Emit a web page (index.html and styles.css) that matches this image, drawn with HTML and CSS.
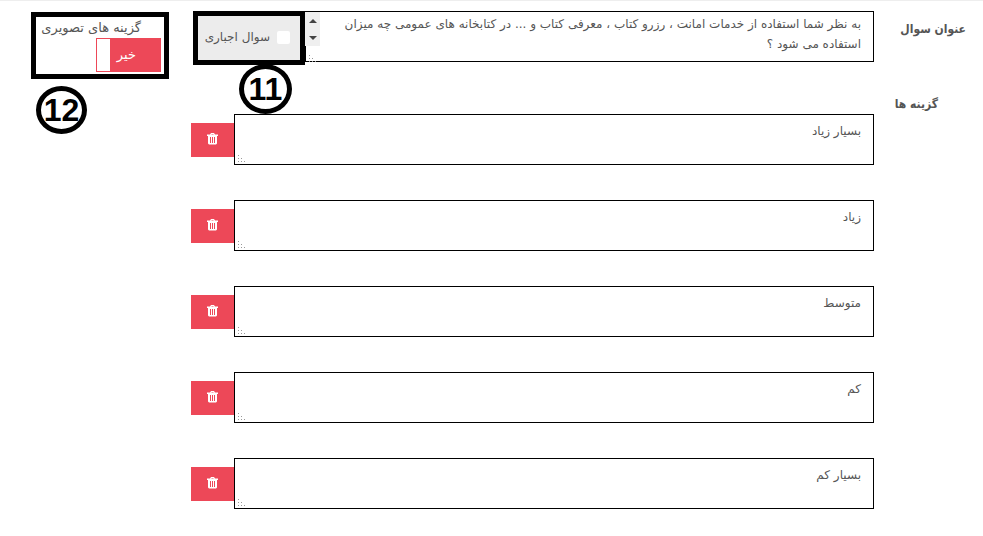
FILE: index.html
```
<!DOCTYPE html>
<html lang="fa" dir="rtl">
<head>
  <meta charset="UTF-8">
  <title>عنوان سوال</title>
  <link rel="stylesheet" href="styles.css">
</head>
<body>
  <svg class="sprite">
    <symbol id="trash" viewBox="0 0 11 12">
      <path fill="#fff" fill-rule="evenodd" d="M0 1.500h3L4 0h3l1 1.500h3V3h-1v7.500L9 11.500H2l-1-1V3H0zM4.300 1.500h2.400L6.300 1H4.700zM3 4v6h1V4zM5 4v6h1V4zM7 4v6h1V4z"/>
    </symbol>
    <symbol id="grip" viewBox="0 0 9 9">
      <path fill="#999" d="M1 1h1v1H1zM1 4h1v1H1zM4 4h1v1H4zM1 7h1v1H1zM4 7h1v1H4zM7 7h1v1H7z"/>
    </symbol>
  </svg>

  <form class="question-form">
    <!-- Question title -->
    <div class="form-row">
      <label class="row-label" for="title">عنوان سوال</label>
      <div class="title-group">
        <div class="field">
          <textarea id="title" class="text-area">به نظر شما استفاده از خدمات امانت ، رزرو کتاب ، معرفی کتاب و ... در کتابخانه های عمومی چه میزان استفاده می شود ؟</textarea>
          <svg class="scroller" viewBox="0 0 15 34">
            <rect width="15" height="34" fill="#efefef"/>
            <path fill="#444" d="M4 11l4-4 4 4zM4 24h8l-4 4z"/>
          </svg>
          <svg class="grip"><use href="#grip"/></svg>
        </div>
        <div class="required-box">
          <label class="required-label"><input type="checkbox" class="check">سوال اجباری</label>
          <span class="callout">11</span>
        </div>
      </div>
      <div class="image-box">
        <span class="switch-title" id="switch-title">گزینه های تصویری</span>
        <button type="button" class="switch" role="switch" aria-checked="false" aria-labelledby="switch-title">خیر</button>
        <span class="callout callout-side">12</span>
      </div>
    </div>

    <!-- Options -->
    <div class="form-row options-row">
      <span class="row-label options-label">گزینه ها</span>
      <div class="options">
        <div class="option">
          <div class="field">
            <textarea class="text-area option-area" aria-label="گزینه ۱">بسیار زیاد</textarea>
            <svg class="grip"><use href="#grip"/></svg>
          </div>
          <button type="button" class="delete" aria-label="حذف"><svg class="icon"><use href="#trash"/></svg></button>
        </div>
        <div class="option">
          <div class="field">
            <textarea class="text-area option-area" aria-label="گزینه ۲">زیاد</textarea>
            <svg class="grip"><use href="#grip"/></svg>
          </div>
          <button type="button" class="delete" aria-label="حذف"><svg class="icon"><use href="#trash"/></svg></button>
        </div>
        <div class="option">
          <div class="field">
            <textarea class="text-area option-area" aria-label="گزینه ۳">متوسط</textarea>
            <svg class="grip"><use href="#grip"/></svg>
          </div>
          <button type="button" class="delete" aria-label="حذف"><svg class="icon"><use href="#trash"/></svg></button>
        </div>
        <div class="option">
          <div class="field">
            <textarea class="text-area option-area" aria-label="گزینه ۴">کم</textarea>
            <svg class="grip"><use href="#grip"/></svg>
          </div>
          <button type="button" class="delete" aria-label="حذف"><svg class="icon"><use href="#trash"/></svg></button>
        </div>
        <div class="option">
          <div class="field">
            <textarea class="text-area option-area" aria-label="گزینه ۵">بسیار کم</textarea>
            <svg class="grip"><use href="#grip"/></svg>
          </div>
          <button type="button" class="delete" aria-label="حذف"><svg class="icon"><use href="#trash"/></svg></button>
        </div>
      </div>
    </div>
  </form>
</body>
</html>
```

FILE: styles.css
```
* {
  box-sizing: border-box;
}

body {
  margin: 0;
  border-top: 1px solid #eee;
  background: #fff;
  color: #555;
  font-family: "DejaVu Sans", sans-serif;
  font-size: 12px;
  line-height: 20px;
}

.sprite {
  position: absolute;
  width: 0;
  height: 0;
}

.question-form {
  padding-top: 10px;
}

.form-row {
  display: grid;
  grid-template-columns: 109px 1fr 191px;
  align-items: start;
}

.row-label {
  padding: 8px 17px 0 0;
  font-family: "DejaVu Sans Condensed", "DejaVu Sans", sans-serif;
  font-weight: bold;
}

.title-group {
  display: flex;
  padding-left: 2px;
}

.field {
  position: relative;
  flex: 1;
}

.text-area {
  display: block;
  width: 100%;
  height: 51px;
  padding: 2px 12px 0 20px;
  border: 1px solid #000;
  border-radius: 0;
  background: #fff;
  color: #555;
  font: inherit;
  resize: none;
  overflow: hidden;
}

.option-area {
  padding-top: 6px;
}

.scroller {
  position: absolute;
  top: 1px;
  left: 0;
  width: 15px;
  height: 34px;
}

.grip {
  position: absolute;
  bottom: 2px;
  left: 3px;
  width: 9px;
  height: 9px;
}

.required-box {
  position: relative;
  width: 112px;
  height: 54px;
  border: 5px solid #000;
  background: #ececec;
}

.required-label {
  display: flex;
  align-items: center;
  gap: 7px;
  height: 100%;
  padding: 0 10px 2px 0;
  white-space: nowrap;
}

.check {
  appearance: none;
  width: 13px;
  height: 13px;
  margin: 0;
  border-radius: 2px;
  background: #fff;
}

.image-box {
  position: relative;
  display: flex;
  flex-direction: column;
  align-items: flex-start;
  justify-self: end;
  width: 138px;
  height: 67px;
  margin: 1px 0 0 31px;
  padding: 1px 3px;
  border: 5px solid #000;
  font-size: 13px;
}

.switch-title {
  padding-right: 20px;
  white-space: nowrap;
}

.switch {
  width: 65px;
  height: 34px;
  padding: 0 24px 0 0;
  border: 1px solid #ed4858;
  background: linear-gradient(to right, #fff 13px, #ed4858 13px);
  color: #fff;
  font: inherit;
  text-align: right;
}

/* Numbered markers under the framed boxes */
.callout {
  position: absolute;
  top: 48px;
  left: 41px;
  width: 53px;
  height: 50px;
  border: 5px solid #000;
  border-radius: 50%;
  color: #000;
  font-family: "Liberation Sans", sans-serif;
  font-size: 32px;
  font-weight: bold;
  line-height: 40px;
  text-align: center;
}

.callout-side {
  top: 69px;
  left: 0;
  width: 51px;
  height: 48px;
  line-height: 38px;
}

.options-row {
  margin-top: 15px;
}

.options-label {
  padding: 0 45px 0 0;
}

.options {
  display: grid;
  gap: 35px;
  padding-top: 20px;
}

.option {
  display: flex;
  align-items: center;
}

.delete {
  display: flex;
  align-items: center;
  justify-content: center;
  width: 43px;
  height: 34px;
  padding: 0 0 2px;
  border: 0;
  background: #ed4858;
}

.icon {
  width: 11px;
  height: 12px;
}
```
